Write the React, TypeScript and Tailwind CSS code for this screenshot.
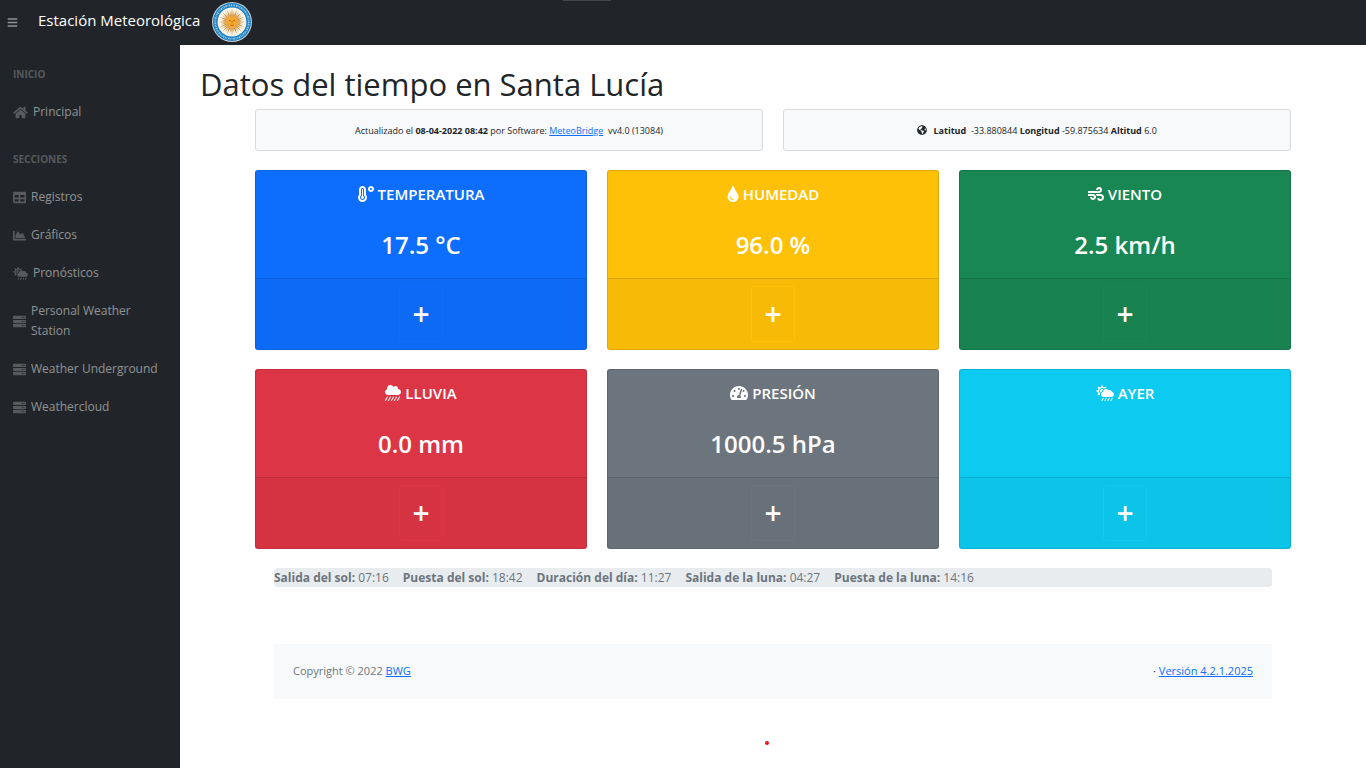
import type { IconType } from "react-icons";
import {
  FaBars,
  FaChartArea,
  FaCloudShowersHeavy,
  FaCloudSunRain,
  FaGlobeAmericas,
  FaHome,
  FaServer,
  FaTable,
  FaTachometerAlt,
  FaTemperatureHigh,
  FaTint,
  FaWind,
} from "react-icons/fa";

type MenuItem = { text: string; icon: IconType; size: string };

const inicio: MenuItem[] = [{ text: "Principal", icon: FaHome, size: "w-[15px] h-[13px]" }];

const secciones: MenuItem[] = [
  { text: "Registros", icon: FaTable, size: "size-[13px]" },
  { text: "Gráficos", icon: FaChartArea, size: "size-[13px]" },
  { text: "Pronósticos", icon: FaCloudSunRain, size: "w-[15px] h-[13px]" },
  { text: "Personal Weather Station", icon: FaServer, size: "size-[13px]" },
  { text: "Weather Underground", icon: FaServer, size: "size-[13px]" },
  { text: "Weathercloud", icon: FaServer, size: "size-[13px]" },
];

const cards = [
  { title: "TEMPERATURA", value: "17.5 °C", icon: FaTemperatureHigh, size: "w-4", color: "bg-[#0d6efd]", border: "border-[#0d6efd]" },
  { title: "HUMEDAD", value: "96.0 %", icon: FaTint, size: "w-3", color: "bg-[#ffc107]", border: "border-[#ffc107]" },
  { title: "VIENTO", value: "2.5 km/h", icon: FaWind, size: "w-4", color: "bg-[#198754]", border: "border-[#198754]" },
  { title: "LLUVIA", value: "0.0 mm", icon: FaCloudShowersHeavy, size: "w-4", color: "bg-[#dc3545]", border: "border-[#dc3545]" },
  { title: "PRESIÓN", value: "1000.5 hPa", icon: FaTachometerAlt, size: "w-[18px]", color: "bg-[#6c757d]", border: "border-[#6c757d]" },
  { title: "AYER", value: "", icon: FaCloudSunRain, size: "w-[18px]", color: "bg-[#0dcaf0]", border: "border-[#0dcaf0]" },
];

const astro = [
  ["Salida del sol:", "07:16"],
  ["Puesta del sol:", "18:42"],
  ["Duración del día:", "11:27"],
  ["Salida de la luna:", "04:27"],
  ["Puesta de la luna:", "14:16"],
];

const rays = Array.from({ length: 32 }, (_, i) => i * 11.25);

function Logo() {
  return (
    <svg viewBox="0 0 40 40" className="size-10" aria-hidden="true">
      <circle cx="20" cy="20" r="20" fill="#c3ced6" />
      <circle cx="20" cy="20" r="19" fill="#1b7fc0" />
      {/* lettering round the ring */}
      <circle cx="20" cy="20" r="16.8" fill="none" stroke="#8cc3e4" strokeWidth="2" strokeDasharray="1 .7 1.6 .8 .7 .6" />
      <circle cx="20" cy="20" r="14.4" fill="#fbf6ea" />
      {rays.map((r, i) => (
        <path
          key={r}
          d={i % 2 ? "M19.3 14 L20 7.5 L20.7 14 Z" : "M19.2 14 L20 6.2 L20.8 14 Z"}
          fill={i % 2 ? "#d9a55a" : "#c98a3c"}
          transform={`rotate(${r} 20 20)`}
        />
      ))}
      <circle cx="20" cy="20" r="6.4" fill="#e9a544" />
      <circle cx="20" cy="20" r="5.4" fill="#f6a82c" />
      <path
        d="M16.8 18.6h2M21.2 18.6h2M20 18.8v2.4M18.2 23q1.8 1 3.6 0"
        fill="none"
        stroke="#a86412"
        strokeWidth=".8"
      />
    </svg>
  );
}

function Menu({ title, items }: { title: string; items: MenuItem[] }) {
  return (
    <div>
      <h2 className="px-[13px] pt-[23px] pb-[13px] text-[10px] leading-[11px] font-bold text-white/25">{title}</h2>
      {items.map(({ text, icon: Icon, size }) => (
        <a key={text} href="#" className="flex items-center gap-[5px] px-[13px] py-[9px] text-xs leading-5 text-white/50">
          <Icon className={`shrink-0 text-white/25 ${size}`} />
          {text}
        </a>
      ))}
    </div>
  );
}

export default function App() {
  return (
    <div className="flex min-h-screen flex-col bg-white font-['Open_Sans','Noto_Sans',sans-serif] text-xs text-[#212529]">
      <nav className="relative flex h-[45px] items-center bg-[#212529]">
        <div className="absolute top-0 left-1/2 -ml-[120px] h-px w-12 bg-[#444648]" />
        <button type="button" aria-label="Menú" className="ml-[7px] text-[11px] text-white/50">
          <FaBars />
        </button>
        <a href="#" className="ml-5 flex items-center gap-3 pb-0.5 text-[15px] leading-6 text-white">
          <span className="pb-1">Estación Meteorológica</span>
          <Logo />
        </a>
      </nav>

      <div className="flex grow">
        <aside className="w-[180px] shrink-0 bg-[#212529] pt-px">
          <Menu title="INICIO" items={inicio} />
          <Menu title="SECCIONES" items={secciones} />
        </aside>

        <main className="min-w-0 grow px-5 pt-5">
          <h1 className="text-[31px] leading-[38px] font-medium">Datos del tiempo en Santa Lucía</h1>

          <div className="mt-1.5 px-[55px]">
            <div className="grid grid-cols-2 gap-5 text-center text-[9px] leading-4">
              <div className="rounded-[3px] border border-[#d9dadb] bg-[#f8f9fa] pt-[13px] pb-[11px]">
                Actualizado el <b>08-04-2022 08:42</b> por Software:{" "}
                <a href="#" className="text-[#0d6efd] underline">MeteoBridge</a>&nbsp; vv4.0 (13084)
              </div>
              <div className="rounded-[3px] border border-[#d9dadb] bg-[#f8f9fa] pt-[13px] pb-[11px]">
                <FaGlobeAmericas className="mr-1 inline size-2.5 align-[-1px]" /> <b>Latitud</b>&nbsp; -33.880844{" "}
                <b>Longitud</b> -59.875634 <b>Altitud</b> 6.0
              </div>
            </div>

            <div className="mt-[19px] grid grid-cols-3 gap-x-5 gap-y-[19px] text-center text-white">
              {cards.map(({ title, value, icon: Icon, size, color, border }) => (
                <section key={title} className={`rounded-[3px] border border-black/12 ${color}`}>
                  <div className="h-[107px] pt-[13px]">
                    <h2 className="flex items-center justify-center gap-1 text-[15px] leading-5 font-semibold">
                      <Icon className={`h-4 ${size}`} />
                      {title}
                    </h2>
                    <p className="mt-[25px] text-2xl leading-8 font-semibold">{value}</p>
                  </div>
                  <div className="border-t border-black/12 bg-black/3 py-[7px]">
                    <button
                      type="button"
                      aria-label={`Ver más de ${title}`}
                      className={`h-14 w-11 rounded-[3px] border text-3xl font-semibold ${border}`}
                    >
                      +
                    </button>
                  </div>
                </section>
              ))}
            </div>

            <div className="mx-[19px] mt-[19px] flex gap-3.5 rounded-[3px] bg-[#e9ecef] pt-px leading-[18px] text-[#6c757d]">
              {astro.map(([label, hour]) => (
                <span key={label}>
                  <b>{label}</b> {hour}
                </span>
              ))}
            </div>

            <footer className="mx-[19px] mt-[57px] flex items-center justify-between bg-[#f8f9fa] px-[19px] pt-[18px] pb-5 text-[11px] leading-[17px]">
              <div className="text-[#6c757d]">
                Copyright © 2022 <a href="#" className="text-[#0d6efd] underline">BWG</a>
              </div>
              <div>
                · <a href="#" className="text-[#0d6efd] underline">Versión 4.2.1.2025</a>
              </div>
            </footer>
            <div className="mx-auto mt-[42px] size-1 -translate-x-1.5 rounded-full bg-[#e8141c]" />
          </div>
        </main>
      </div>
    </div>
  );
}
